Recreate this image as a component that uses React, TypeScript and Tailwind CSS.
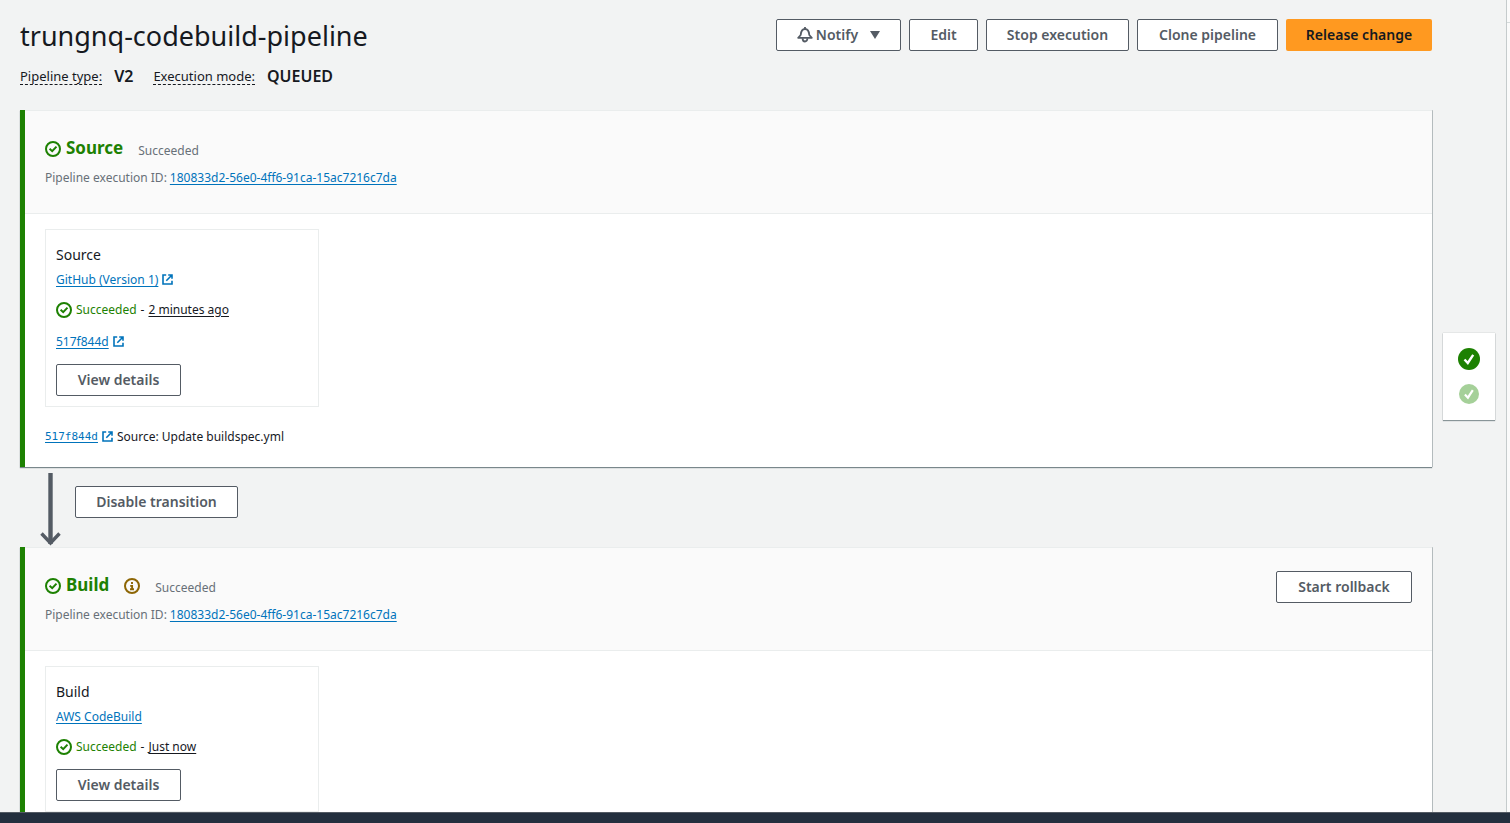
import type { ReactNode } from "react";

function CheckCircle() {
  return (
    <svg viewBox="0 0 16 16" className="size-4 shrink-0 fill-none stroke-[#1d8102] stroke-2" aria-hidden="true">
      <circle cx="8" cy="8" r="7" />
      <path d="M4.6 7.8 7.2 10.2 11.5 5.6" />
    </svg>
  );
}

function InfoCircle() {
  return (
    <svg viewBox="0 0 16 16" className="size-4 shrink-0" fill="none" stroke="#8d6605" strokeWidth="2" aria-hidden="true">
      <circle cx="8" cy="8" r="7" />
      <path d="M8 4v2M6.2 7.9H8.1V11M6 11.2h4" strokeWidth="1.9" />
    </svg>
  );
}

function ExternalIcon() {
  return (
    <svg viewBox="0 0 11 11" className="mb-0.5 size-[11px] shrink-0" fill="none" stroke="#0073bb" strokeWidth="1.6" aria-hidden="true">
      <path d="M4.2 1H1v9h9V6.8" />
      <path d="M6.2 1H10v3.8M10 1 4.3 6.7" />
    </svg>
  );
}

function BellIcon() {
  return (
    <svg viewBox="0 0 16 16" className="size-4 shrink-0" fill="none" stroke="#545b64" strokeWidth="1.8" strokeLinejoin="round" aria-hidden="true">
      <path d="M8 0v2M1.2 10.8h13.6L12.3 8C12 4.4 10.6 2 8 2S4 4.4 3.7 8Z" />
      <path d="M5.6 11.2c0 4.4 4.8 4.4 4.8 0" />
    </svg>
  );
}

function Button({ children, width }: { children: ReactNode; width: string }) {
  return (
    <button
      type="button"
      className={`flex h-8 shrink-0 items-center justify-center whitespace-nowrap rounded-[2px] border border-[#545b64] bg-white text-sm font-semibold text-[#545b64] ${width}`}
    >
      {children}
    </button>
  );
}

function TextLink({ children, className = "" }: { children: ReactNode; className?: string }) {
  return (
    <a href="#" className={`text-[#0073bb] underline underline-offset-2 ${className}`}>
      {children}
    </a>
  );
}

function Stage({ name, info, action, children }: { name: string; info?: boolean; action?: ReactNode; children: ReactNode }) {
  return (
    <section className="border-l-[5px] border-[#1d8102] bg-white shadow-[0_1px_1px_0_rgba(0,28,36,0.5),1px_0_0_0_#c5cbcc]">
      <header className="flex items-start justify-between border-y border-[#eaeded] bg-[#fafafa] px-5 pt-[23px] pb-[25px]">
        <div>
          <div className="flex h-[30px] items-center">
            <CheckCircle />
            <h2 className="ml-[5px] pb-0.5 text-[17px] leading-7 font-bold text-[#1d8102]">{name}</h2>
            {info && (
              <span className="ml-[15px]">
                <InfoCircle />
              </span>
            )}
            <span className="ml-[15px] pt-1 text-xs text-[#687078]">Succeeded</span>
          </div>
          <p className="mt-1 flex gap-[3px] text-xs leading-5 text-[#687078]">
            <span>Pipeline execution ID:</span>
            <TextLink>180833d2-56e0-4ff6-91ca-15ac7216c7da</TextLink>
          </p>
        </div>
        {action}
      </header>
      <div className="px-5 pt-[15px] pb-5">{children}</div>
    </section>
  );
}

function ActionCard({ name, provider, external, time, revision }: { name: string; provider: string; external?: boolean; time: string; revision?: string }) {
  return (
    <article className="w-[274px] border border-[#eaeded] px-2.5 pt-[13px] pb-2.5 text-xs leading-5">
      <h3 className="text-sm leading-6">{name}</h3>
      <p className="mt-[3px] flex items-center gap-1">
        <TextLink>{provider}</TextLink>
        {external && <ExternalIcon />}
      </p>
      <p className="mt-2.5 flex items-center gap-1">
        <CheckCircle />
        <span className="text-[#1d8102]">Succeeded</span>
        <span>-</span>
        <span className="underline underline-offset-2">{time}</span>
      </p>
      {revision && (
        <p className="mt-3 flex items-center gap-1">
          <TextLink>{revision}</TextLink>
          <ExternalIcon />
        </p>
      )}
      <div className="mt-3">
        <Button width="w-[125px]">View details</Button>
      </div>
    </article>
  );
}

function StatusDot({ className }: { className: string }) {
  return (
    <svg viewBox="0 0 22 22" className={className} aria-hidden="true">
      <circle cx="11" cy="11" r="11" />
      <path d="M6.5 11.5 9.8 15 15.2 6.8" fill="none" stroke="white" strokeWidth="2.4" />
    </svg>
  );
}

export default function App() {
  return (
    <div className="flex h-screen flex-col bg-[#f2f3f3] font-['Noto_Sans',sans-serif] text-[#16191f]">
      <div className="flex min-h-0 flex-1 overflow-hidden">
        <main className="min-w-0 flex-1 pl-5">
          <div className="flex h-[53px] items-center justify-between pt-[17px]">
            <h1 className="pt-0.5 text-[27px] leading-9">trungnq-codebuild-pipeline</h1>
            <div className="flex gap-2">
              <Button width="w-[125px]">
                <BellIcon />
                <span className="ml-[3px]">Notify</span>
                <svg viewBox="0 0 10 8" className="ml-3 h-2 w-2.5 fill-[#545b64]" aria-hidden="true">
                  <path d="M0 0h10L5 8Z" />
                </svg>
              </Button>
              <Button width="w-[69px]">Edit</Button>
              <Button width="w-[143px]">Stop execution</Button>
              <Button width="w-[141px]">Clone pipeline</Button>
              <button type="button" className="h-8 w-[146px] rounded-[2px] bg-[#ff9920] text-sm font-semibold whitespace-nowrap">
                Release change
              </button>
            </div>
          </div>
          <dl className="mt-[11px] mb-[22px] flex h-6 items-center">
            <dt className="border-b border-dashed border-[#16191f] text-[13px] leading-4">Pipeline type:</dt>
            <dd className="ml-3 font-semibold">V2</dd>
            <dt className="ml-5 border-b border-dashed border-[#16191f] text-[13px] leading-4">Execution mode:</dt>
            <dd className="ml-3 font-semibold">QUEUED</dd>
          </dl>

          <Stage name="Source">
            <ActionCard name="Source" provider="GitHub (Version 1)" external time="2 minutes ago" revision="517f844d" />
            <p className="mt-5 flex items-center gap-1 text-xs leading-5">
              <TextLink className="font-['DejaVu_Sans_Mono',monospace] text-[11px]">517f844d</TextLink>
              <ExternalIcon />
              <span>Source: Update buildspec.yml</span>
            </p>
          </Stage>

          <div className="flex h-20 items-start pl-5">
            <svg viewBox="0 0 22 74" className="mt-[5px] h-[74px] w-[22px] shrink-0" fill="none" stroke="#545b64" aria-hidden="true">
              <path d="M10.5 1V72" strokeWidth="4.4" />
              <path d="M1.5 61.5 10.5 71 19.5 61.5" strokeWidth="3.4" />
            </svg>
            <div className="mt-[19px] ml-[13px]">
              <Button width="w-[163px]">Disable transition</Button>
            </div>
          </div>

          <Stage name="Build" info action={<Button width="w-[136px]">Start rollback</Button>}>
            <ActionCard name="Build" provider="AWS CodeBuild" time="Just now" />
          </Stage>
        </main>

        <aside className="flex w-[75px] shrink-0 items-start border-r border-[#c5cbcc] px-[11px] pt-[333px]">
          <div className="flex h-[87px] w-full flex-col items-center gap-3.5 bg-white pt-[15px] shadow-[0_1px_1px_0_rgba(0,28,36,0.4),0_0_1px_0_rgba(0,28,36,0.3)]">
            <StatusDot className="size-[22px] fill-[#1d8102]" />
            <StatusDot className="size-5 fill-[#a5d099]" />
          </div>
        </aside>
        <div className="w-[3px] shrink-0 bg-[#fafafa] pt-[22px]">
          <div className="border-t border-[#d5dbdb]" />
        </div>
      </div>
      <footer className="h-[11px] shrink-0 border-t border-[#545b64] bg-[#232f3e]" />
    </div>
  );
}
